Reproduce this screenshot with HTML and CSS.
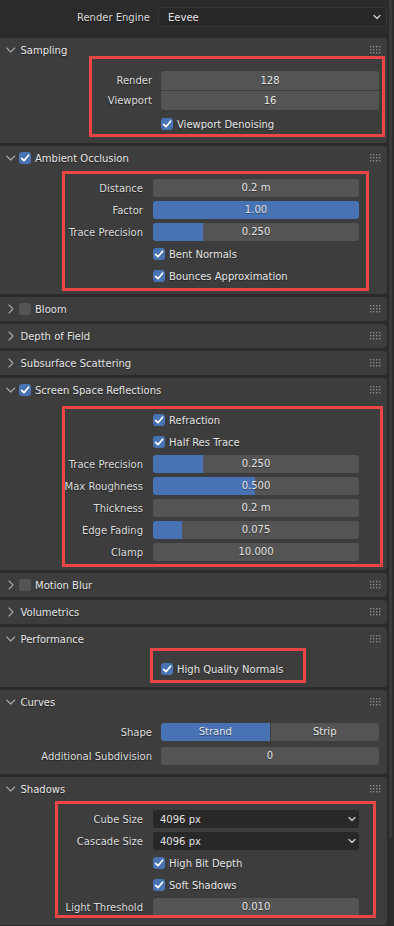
FILE: index.html
```html
<!DOCTYPE html>
<html>
<head>
<meta charset="utf-8">
<link rel="stylesheet" href="styles.css">
</head>
<body>
<div class="app">
  <div class="engine-row">
    <span class="engine-label">Render Engine</span>
    <div class="dropdown engine">
      <span>Eevee</span>
      <svg class="dd-chev" width="8" height="6" viewBox="0 0 8 6"><polyline points="1,1.5 4,4.5 7,1.5"/></svg>
    </div>
  </div>

  <!-- Sampling -->
  <section class="panel open">
    <div class="ph">
      <svg class="chev" width="12" height="12" viewBox="0 0 12 12"><polyline points="2.7,4 6.7,8 10.7,4"/></svg>
      <span class="ph-title">Sampling</span>
      <svg class="grip" width="11" height="8" viewBox="0 0 11 8"><g><rect x="0" y="0" width="1.4" height="1.4"/><rect x="3" y="0" width="1.4" height="1.4"/><rect x="6" y="0" width="1.4" height="1.4"/><rect x="9" y="0" width="1.4" height="1.4"/><rect x="0" y="3" width="1.4" height="1.4"/><rect x="3" y="3" width="1.4" height="1.4"/><rect x="6" y="3" width="1.4" height="1.4"/><rect x="9" y="3" width="1.4" height="1.4"/><rect x="0" y="6" width="1.4" height="1.4"/><rect x="3" y="6" width="1.4" height="1.4"/><rect x="6" y="6" width="1.4" height="1.4"/><rect x="9" y="6" width="1.4" height="1.4"/></g></svg>
    </div>
    <div class="pc wide sampling">
      <div class="aligned">
        <div class="row r19"><span class="lbl">Render</span><div class="field top">128</div></div>
        <div class="row r19"><span class="lbl">Viewport</span><div class="field bottom">16</div></div>
      </div>
      <div class="row"><span class="lbl"></span><label class="check"><span class="box on"></span>Viewport Denoising</label></div>
    </div>
    <div class="mark m-sampling"></div>
  </section>

  <!-- Ambient Occlusion -->
  <section class="panel open">
    <div class="ph">
      <svg class="chev" width="12" height="12" viewBox="0 0 12 12"><polyline points="2.7,4 6.7,8 10.7,4"/></svg>
      <span class="box on hbox"></span>
      <span class="ph-title t-box">Ambient Occlusion</span>
      <svg class="grip" width="11" height="8" viewBox="0 0 11 8"><g><rect x="0" y="0" width="1.4" height="1.4"/><rect x="3" y="0" width="1.4" height="1.4"/><rect x="6" y="0" width="1.4" height="1.4"/><rect x="9" y="0" width="1.4" height="1.4"/><rect x="0" y="3" width="1.4" height="1.4"/><rect x="3" y="3" width="1.4" height="1.4"/><rect x="6" y="3" width="1.4" height="1.4"/><rect x="9" y="3" width="1.4" height="1.4"/><rect x="0" y="6" width="1.4" height="1.4"/><rect x="3" y="6" width="1.4" height="1.4"/><rect x="6" y="6" width="1.4" height="1.4"/><rect x="9" y="6" width="1.4" height="1.4"/></g></svg>
    </div>
    <div class="pc narrow">
      <div class="row"><span class="lbl">Distance</span><div class="field">0.2 m</div></div>
      <div class="row"><span class="lbl">Factor</span><div class="field slider" style="--fill:100%">1.00</div></div>
      <div class="row"><span class="lbl">Trace Precision</span><div class="field slider" style="--fill:24.3%">0.250</div></div>
      <div class="row"><span class="lbl"></span><label class="check"><span class="box on"></span>Bent Normals</label></div>
      <div class="row"><span class="lbl"></span><label class="check"><span class="box on"></span>Bounces Approximation</label></div>
    </div>
    <div class="mark m-ao"></div>
  </section>

  <!-- Bloom -->
  <section class="panel">
    <div class="ph">
      <svg class="chev" width="12" height="12" viewBox="0 0 12 12"><polyline points="5,2 9,6 5,10"/></svg>
      <span class="box hbox"></span>
      <span class="ph-title t-box">Bloom</span>
      <svg class="grip" width="11" height="8" viewBox="0 0 11 8"><g><rect x="0" y="0" width="1.4" height="1.4"/><rect x="3" y="0" width="1.4" height="1.4"/><rect x="6" y="0" width="1.4" height="1.4"/><rect x="9" y="0" width="1.4" height="1.4"/><rect x="0" y="3" width="1.4" height="1.4"/><rect x="3" y="3" width="1.4" height="1.4"/><rect x="6" y="3" width="1.4" height="1.4"/><rect x="9" y="3" width="1.4" height="1.4"/><rect x="0" y="6" width="1.4" height="1.4"/><rect x="3" y="6" width="1.4" height="1.4"/><rect x="6" y="6" width="1.4" height="1.4"/><rect x="9" y="6" width="1.4" height="1.4"/></g></svg>
    </div>
  </section>

  <!-- Depth of Field -->
  <section class="panel">
    <div class="ph">
      <svg class="chev" width="12" height="12" viewBox="0 0 12 12"><polyline points="5,2 9,6 5,10"/></svg>
      <span class="ph-title">Depth of Field</span>
      <svg class="grip" width="11" height="8" viewBox="0 0 11 8"><g><rect x="0" y="0" width="1.4" height="1.4"/><rect x="3" y="0" width="1.4" height="1.4"/><rect x="6" y="0" width="1.4" height="1.4"/><rect x="9" y="0" width="1.4" height="1.4"/><rect x="0" y="3" width="1.4" height="1.4"/><rect x="3" y="3" width="1.4" height="1.4"/><rect x="6" y="3" width="1.4" height="1.4"/><rect x="9" y="3" width="1.4" height="1.4"/><rect x="0" y="6" width="1.4" height="1.4"/><rect x="3" y="6" width="1.4" height="1.4"/><rect x="6" y="6" width="1.4" height="1.4"/><rect x="9" y="6" width="1.4" height="1.4"/></g></svg>
    </div>
  </section>

  <!-- Subsurface Scattering -->
  <section class="panel">
    <div class="ph">
      <svg class="chev" width="12" height="12" viewBox="0 0 12 12"><polyline points="5,2 9,6 5,10"/></svg>
      <span class="ph-title">Subsurface Scattering</span>
      <svg class="grip" width="11" height="8" viewBox="0 0 11 8"><g><rect x="0" y="0" width="1.4" height="1.4"/><rect x="3" y="0" width="1.4" height="1.4"/><rect x="6" y="0" width="1.4" height="1.4"/><rect x="9" y="0" width="1.4" height="1.4"/><rect x="0" y="3" width="1.4" height="1.4"/><rect x="3" y="3" width="1.4" height="1.4"/><rect x="6" y="3" width="1.4" height="1.4"/><rect x="9" y="3" width="1.4" height="1.4"/><rect x="0" y="6" width="1.4" height="1.4"/><rect x="3" y="6" width="1.4" height="1.4"/><rect x="6" y="6" width="1.4" height="1.4"/><rect x="9" y="6" width="1.4" height="1.4"/></g></svg>
    </div>
  </section>

  <!-- Screen Space Reflections -->
  <section class="panel open">
    <div class="ph">
      <svg class="chev" width="12" height="12" viewBox="0 0 12 12"><polyline points="2.7,4 6.7,8 10.7,4"/></svg>
      <span class="box on hbox"></span>
      <span class="ph-title t-box">Screen Space Reflections</span>
      <svg class="grip" width="11" height="8" viewBox="0 0 11 8"><g><rect x="0" y="0" width="1.4" height="1.4"/><rect x="3" y="0" width="1.4" height="1.4"/><rect x="6" y="0" width="1.4" height="1.4"/><rect x="9" y="0" width="1.4" height="1.4"/><rect x="0" y="3" width="1.4" height="1.4"/><rect x="3" y="3" width="1.4" height="1.4"/><rect x="6" y="3" width="1.4" height="1.4"/><rect x="9" y="3" width="1.4" height="1.4"/><rect x="0" y="6" width="1.4" height="1.4"/><rect x="3" y="6" width="1.4" height="1.4"/><rect x="6" y="6" width="1.4" height="1.4"/><rect x="9" y="6" width="1.4" height="1.4"/></g></svg>
    </div>
    <div class="pc narrow">
      <div class="row"><span class="lbl"></span><label class="check"><span class="box on"></span>Refraction</label></div>
      <div class="row"><span class="lbl"></span><label class="check"><span class="box on"></span>Half Res Trace</label></div>
      <div class="row"><span class="lbl">Trace Precision</span><div class="field slider" style="--fill:24.3%">0.250</div></div>
      <div class="row"><span class="lbl">Max Roughness</span><div class="field slider" style="--fill:49.5%">0.500</div></div>
      <div class="row"><span class="lbl">Thickness</span><div class="field">0.2 m</div></div>
      <div class="row"><span class="lbl">Edge Fading</span><div class="field slider" style="--fill:14%">0.075</div></div>
      <div class="row"><span class="lbl">Clamp</span><div class="field">10.000</div></div>
    </div>
    <div class="mark m-ssr"></div>
  </section>

  <!-- Motion Blur -->
  <section class="panel">
    <div class="ph">
      <svg class="chev" width="12" height="12" viewBox="0 0 12 12"><polyline points="5,2 9,6 5,10"/></svg>
      <span class="box hbox"></span>
      <span class="ph-title t-box">Motion Blur</span>
      <svg class="grip" width="11" height="8" viewBox="0 0 11 8"><g><rect x="0" y="0" width="1.4" height="1.4"/><rect x="3" y="0" width="1.4" height="1.4"/><rect x="6" y="0" width="1.4" height="1.4"/><rect x="9" y="0" width="1.4" height="1.4"/><rect x="0" y="3" width="1.4" height="1.4"/><rect x="3" y="3" width="1.4" height="1.4"/><rect x="6" y="3" width="1.4" height="1.4"/><rect x="9" y="3" width="1.4" height="1.4"/><rect x="0" y="6" width="1.4" height="1.4"/><rect x="3" y="6" width="1.4" height="1.4"/><rect x="6" y="6" width="1.4" height="1.4"/><rect x="9" y="6" width="1.4" height="1.4"/></g></svg>
    </div>
  </section>

  <!-- Volumetrics -->
  <section class="panel">
    <div class="ph">
      <svg class="chev" width="12" height="12" viewBox="0 0 12 12"><polyline points="5,2 9,6 5,10"/></svg>
      <span class="ph-title">Volumetrics</span>
      <svg class="grip" width="11" height="8" viewBox="0 0 11 8"><g><rect x="0" y="0" width="1.4" height="1.4"/><rect x="3" y="0" width="1.4" height="1.4"/><rect x="6" y="0" width="1.4" height="1.4"/><rect x="9" y="0" width="1.4" height="1.4"/><rect x="0" y="3" width="1.4" height="1.4"/><rect x="3" y="3" width="1.4" height="1.4"/><rect x="6" y="3" width="1.4" height="1.4"/><rect x="9" y="3" width="1.4" height="1.4"/><rect x="0" y="6" width="1.4" height="1.4"/><rect x="3" y="6" width="1.4" height="1.4"/><rect x="6" y="6" width="1.4" height="1.4"/><rect x="9" y="6" width="1.4" height="1.4"/></g></svg>
    </div>
  </section>

  <!-- Performance -->
  <section class="panel open">
    <div class="ph">
      <svg class="chev" width="12" height="12" viewBox="0 0 12 12"><polyline points="2.7,4 6.7,8 10.7,4"/></svg>
      <span class="ph-title">Performance</span>
      <svg class="grip" width="11" height="8" viewBox="0 0 11 8"><g><rect x="0" y="0" width="1.4" height="1.4"/><rect x="3" y="0" width="1.4" height="1.4"/><rect x="6" y="0" width="1.4" height="1.4"/><rect x="9" y="0" width="1.4" height="1.4"/><rect x="0" y="3" width="1.4" height="1.4"/><rect x="3" y="3" width="1.4" height="1.4"/><rect x="6" y="3" width="1.4" height="1.4"/><rect x="9" y="3" width="1.4" height="1.4"/><rect x="0" y="6" width="1.4" height="1.4"/><rect x="3" y="6" width="1.4" height="1.4"/><rect x="6" y="6" width="1.4" height="1.4"/><rect x="9" y="6" width="1.4" height="1.4"/></g></svg>
    </div>
    <div class="pc wide">
      <div class="row"><span class="lbl"></span><label class="check"><span class="box on"></span>High Quality Normals</label></div>
    </div>
    <div class="mark m-perf"></div>
  </section>

  <!-- Curves -->
  <section class="panel open">
    <div class="ph">
      <svg class="chev" width="12" height="12" viewBox="0 0 12 12"><polyline points="2.7,4 6.7,8 10.7,4"/></svg>
      <span class="ph-title">Curves</span>
      <svg class="grip" width="11" height="8" viewBox="0 0 11 8"><g><rect x="0" y="0" width="1.4" height="1.4"/><rect x="3" y="0" width="1.4" height="1.4"/><rect x="6" y="0" width="1.4" height="1.4"/><rect x="9" y="0" width="1.4" height="1.4"/><rect x="0" y="3" width="1.4" height="1.4"/><rect x="3" y="3" width="1.4" height="1.4"/><rect x="6" y="3" width="1.4" height="1.4"/><rect x="9" y="3" width="1.4" height="1.4"/><rect x="0" y="6" width="1.4" height="1.4"/><rect x="3" y="6" width="1.4" height="1.4"/><rect x="6" y="6" width="1.4" height="1.4"/><rect x="9" y="6" width="1.4" height="1.4"/></g></svg>
    </div>
    <div class="pc wide curves">
      <div class="row"><span class="lbl">Shape</span>
        <div class="seg"><div class="seg-btn active">Strand</div><div class="seg-btn">Strip</div></div>
      </div>
      <div class="row"><span class="lbl">Additional Subdivision</span><div class="field">0</div></div>
    </div>
  </section>

  <!-- Shadows -->
  <section class="panel open">
    <div class="ph">
      <svg class="chev" width="12" height="12" viewBox="0 0 12 12"><polyline points="2.7,4 6.7,8 10.7,4"/></svg>
      <span class="ph-title">Shadows</span>
      <svg class="grip" width="11" height="8" viewBox="0 0 11 8"><g><rect x="0" y="0" width="1.4" height="1.4"/><rect x="3" y="0" width="1.4" height="1.4"/><rect x="6" y="0" width="1.4" height="1.4"/><rect x="9" y="0" width="1.4" height="1.4"/><rect x="0" y="3" width="1.4" height="1.4"/><rect x="3" y="3" width="1.4" height="1.4"/><rect x="6" y="3" width="1.4" height="1.4"/><rect x="9" y="3" width="1.4" height="1.4"/><rect x="0" y="6" width="1.4" height="1.4"/><rect x="3" y="6" width="1.4" height="1.4"/><rect x="6" y="6" width="1.4" height="1.4"/><rect x="9" y="6" width="1.4" height="1.4"/></g></svg>
    </div>
    <div class="pc narrow">
      <div class="row"><span class="lbl">Cube Size</span>
        <div class="dropdown field-dd"><span>4096 px</span><svg class="dd-chev" width="8" height="6" viewBox="0 0 8 6"><polyline points="1,1.5 4,4.5 7,1.5"/></svg></div>
      </div>
      <div class="row"><span class="lbl">Cascade Size</span>
        <div class="dropdown field-dd"><span>4096 px</span><svg class="dd-chev" width="8" height="6" viewBox="0 0 8 6"><polyline points="1,1.5 4,4.5 7,1.5"/></svg></div>
      </div>
      <div class="row"><span class="lbl"></span><label class="check"><span class="box on"></span>High Bit Depth</label></div>
      <div class="row"><span class="lbl"></span><label class="check"><span class="box on"></span>Soft Shadows</label></div>
      <div class="row"><span class="lbl">Light Threshold</span><div class="field">0.010</div></div>
    </div>
    <div class="mark m-shadows"></div>
  </section>

  <div class="scrollbar"></div>
</div>
</body>
</html>
```

FILE: styles.css
```css
* { box-sizing: border-box; }

html, body {
  margin: 0;
  padding: 0;
  background: #2b2b2b;
}

body {
  width: 394px;
  height: 926px;
  overflow: hidden;
  font-family: "DejaVu Sans", "Liberation Sans", sans-serif;
  font-size: 10px;
  color: #e6e6e6;
  text-shadow: 0 1px 1px rgba(0, 0, 0, 0.45);
}

.app {
  position: relative;
  width: 394px;
  height: 926px;
}

/* top row */
.engine-row {
  display: flex;
  align-items: center;
  height: 35px;
  padding: 7px 7px 8px 0;
}

.engine-label {
  width: 150px;
  text-align: right;
  color: #dcdcdc;
  margin-right: 8px;
}

.dropdown {
  display: flex;
  align-items: center;
  background: #282828;
  border-radius: 4px;
  color: #e6e6e6;
}

.dropdown.engine {
  flex: 1;
  height: 20px;
  padding: 0 5px 0 9px;
  border: 1px solid #373737;
}

.dropdown span { flex: 1; }

.dd-chev {
  fill: none;
  stroke: #cfcfcf;
  stroke-width: 1.3;
  stroke-linecap: round;
  stroke-linejoin: round;
}

/* panels */
.panel {
  position: relative;
  width: 387px;
  margin-top: 3px;
  background: #3d3d3d;
  border-radius: 0 4px 4px 0;
}

.ph {
  display: flex;
  align-items: center;
  height: 24px;
  padding-left: 4px;
}

.chev {
  flex: none;
  fill: none;
  stroke: #a8a8a8;
  stroke-width: 1.1;
  stroke-linecap: round;
  stroke-linejoin: round;
}

.ph-title {
  margin-left: 4.5px;
  color: #e6e6e6;
}

.ph-title.t-box { margin-left: 4px; }

.hbox { margin-left: 3px; }

.grip {
  margin-left: auto;
  margin-right: 6px;
  fill: #8c8c8c;
}

/* content */
.pc {
  padding: 7px 0 7px 0;
}

.pc.sampling { padding-bottom: 8px; }

.pc.wide { padding-right: 8px; }
.pc.narrow { padding-right: 28px; }

.row {
  display: flex;
  align-items: center;
  height: 22px;
}

.row.r19 { height: 19px; }

.lbl {
  flex: none;
  text-align: right;
  color: #dcdcdc;
  white-space: nowrap;
}

.wide .lbl { width: 152px; margin-right: 9px; }
.narrow .lbl { width: 143px; margin-right: 10px; }

.aligned {
  display: flex;
  flex-direction: column;
  gap: 1px;
  margin: 2px 0 3px;
}

.curves .row + .row { margin-top: 2px; }

.field {
  flex: 1;
  height: 18px;
  line-height: 18px;
  text-align: center;
  background: #545454;
  border-radius: 3px;
  color: #e6e6e6;
}

.r19 .field { height: 19px; line-height: 19px; }
.field.top { border-radius: 3px 3px 0 0; }
.field.bottom { border-radius: 0 0 3px 3px; }

.field.slider {
  background: linear-gradient(to right, #4772b3 var(--fill), #545454 var(--fill));
}

.field-dd {
  flex: 1;
  height: 18px;
  padding: 0 3px 0 7px;
  border-radius: 3px;
}

/* checkboxes */
.check {
  display: flex;
  align-items: center;
  color: #e6e6e6;
}

.box {
  flex: none;
  display: inline-block;
  width: 12px;
  height: 12px;
  border-radius: 3px;
  background: #545454;
  margin-right: 4px;
}

.hbox { margin-right: 0; }

.box.on {
  background-color: #4772b3;
  background-image: url("data:image/svg+xml,%3Csvg xmlns='http://www.w3.org/2000/svg' width='12' height='12' viewBox='0 0 12 12'%3E%3Cpolyline points='2.6,6.3 5,8.7 9.6,3.2' fill='none' stroke='white' stroke-width='1.7' stroke-linecap='round' stroke-linejoin='round'/%3E%3C/svg%3E");
  background-repeat: no-repeat;
}

/* segmented */
.seg {
  flex: 1;
  display: flex;
  gap: 1px;
  height: 18px;
}

.seg-btn {
  flex: 1;
  line-height: 18px;
  text-align: center;
  background: #545454;
  color: #e6e6e6;
}

.seg-btn:first-child { border-radius: 3px 0 0 3px; }
.seg-btn:last-child { border-radius: 0 3px 3px 0; }
.seg-btn.active { background: #4772b3; }

/* red annotation boxes */
.mark {
  position: absolute;
  border: 3px solid #ec4545;
  pointer-events: none;
}

.m-sampling { top: 18px; left: 89px; width: 296px; height: 81px; }
.m-ao { top: 25px; left: 62px; width: 307px; height: 120px; }
.m-ssr { top: 28px; left: 62px; width: 321px; height: 161px; }
.m-perf { top: 21px; left: 150px; width: 156px; height: 35px; }
.m-shadows { top: 24px; left: 55px; width: 321px; height: 117px; }

.scrollbar {
  position: absolute;
  top: 0;
  left: 389px;
  width: 3px;
  height: 838px;
  background: #3a3a3a;
  border-radius: 2px;
}
```
